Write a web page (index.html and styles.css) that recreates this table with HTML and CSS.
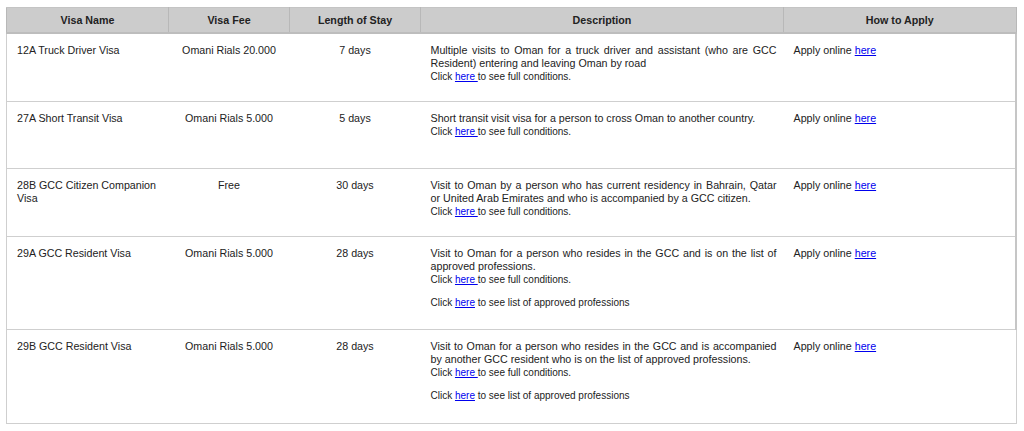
FILE: index.html
```html
<!DOCTYPE html>
<html>
<head>
<meta charset="utf-8">
<link rel="stylesheet" href="styles.css">
</head>
<body>
<table class="visa-table">
  <colgroup>
    <col class="c-name">
    <col class="c-fee">
    <col class="c-stay">
    <col class="c-desc">
    <col class="c-apply">
  </colgroup>
  <thead>
    <tr>
      <th>Visa Name</th>
      <th>Visa Fee</th>
      <th>Length of Stay</th>
      <th>Description</th>
      <th>How to Apply</th>
    </tr>
  </thead>
  <tbody>
    <tr class="r-68">
      <td class="name">12A Truck Driver Visa</td>
      <td class="center">Omani Rials 20.000</td>
      <td class="center">7 days</td>
      <td class="desc"><p class="main">Multiple visits to Oman for a truck driver and assistant (who are GCC Resident) entering and leaving Oman by road</p><p class="small">Click <a href="#">here </a>to see full conditions.</p></td>
      <td class="apply">Apply online <a href="#">here</a></td>
    </tr>
    <tr class="r-67">
      <td class="name">27A Short Transit Visa</td>
      <td class="center">Omani Rials 5.000</td>
      <td class="center">5 days</td>
      <td class="desc"><p class="main">Short transit visit visa for a person to cross Oman to another country.</p><p class="small">Click <a href="#">here </a>to see full conditions.</p></td>
      <td class="apply">Apply online <a href="#">here</a></td>
    </tr>
    <tr class="r-68">
      <td class="name">28B GCC Citizen Companion Visa</td>
      <td class="center">Free</td>
      <td class="center">30 days</td>
      <td class="desc"><p class="main">Visit to Oman by a person who has current residency in Bahrain, Qatar or United Arab Emirates and who is accompanied by a GCC citizen.</p><p class="small">Click <a href="#">here </a>to see full conditions.</p></td>
      <td class="apply">Apply online <a href="#">here</a></td>
    </tr>
    <tr class="r-93">
      <td class="name">29A GCC Resident Visa</td>
      <td class="center">Omani Rials 5.000</td>
      <td class="center">28 days</td>
      <td class="desc"><p class="main">Visit to Oman for a person who resides in the GCC and is on the list of approved professions.</p><p class="small">Click <a href="#">here </a>to see full conditions.</p><p class="small gap">Click <a href="#">here</a> to see list of approved professions</p></td>
      <td class="apply">Apply online <a href="#">here</a></td>
    </tr>
    <tr class="r-94 last">
      <td class="name">29B GCC Resident Visa</td>
      <td class="center">Omani Rials 5.000</td>
      <td class="center">28 days</td>
      <td class="desc"><p class="main">Visit to Oman for a person who resides in the GCC and is accompanied by another GCC resident who is on the list of approved professions.</p><p class="small">Click <a href="#">here </a>to see full conditions.</p><p class="small gap">Click <a href="#">here</a> to see list of approved professions</p></td>
      <td class="apply">Apply online <a href="#">here</a></td>
    </tr>
  </tbody>
</table>
</body>
</html>
```

FILE: styles.css
```css
html, body {
  margin: 0;
  padding: 0;
  background: #ffffff;
}
body {
  padding: 7px 0 0 6px;
  font-family: "Liberation Sans", Arial, sans-serif;
  color: #222222;
}
.visa-table {
  border-collapse: collapse;
  width: 1011px;
  table-layout: fixed;
  font-size: 10.7px;
  line-height: 13px;
}
.c-name { width: 162px; }
.c-fee { width: 121px; }
.c-stay { width: 131px; }
.c-desc { width: 363px; }
.visa-table th {
  background: #cccccc;
  font-weight: bold;
  text-align: center;
  height: 24px;
  padding: 0;
  border-top: 1px solid #c4c4c4;
  border-bottom: 2px solid #bdbdbd;
  border-left: 1px solid #b8b8b8;
  border-right: 1px solid #b8b8b8;
  color: #222222;
}
.visa-table td {
  vertical-align: top;
  padding: 10px 7px 0 10px;
  border-bottom: 1px solid #cfcfcf;
}
.visa-table td.name {
  padding-right: 3px;
}
.visa-table td:first-child {
  border-left: 1px solid #cfcfcf;
}
.visa-table td:last-child {
  border-right: 2px solid #c6c6c6;
}
.visa-table tr.last td:last-child {
  border-right: 1px solid #cfcfcf;
}
.visa-table td.center {
  text-align: center;
  padding-left: 2px;
  padding-right: 2px;
}
.r-67 { height: 67px; }
.r-68 { height: 68px; }
.r-93 { height: 93px; }
.r-94 { height: 94px; }
.desc p {
  margin: 0;
}
.desc .main {
  text-align: justify;
}
.desc .small {
  font-size: 10px;
  line-height: 13px;
}
.desc .small.gap {
  margin-top: 10px;
}
a {
  color: #0000ee;
  text-decoration: underline;
}
```
